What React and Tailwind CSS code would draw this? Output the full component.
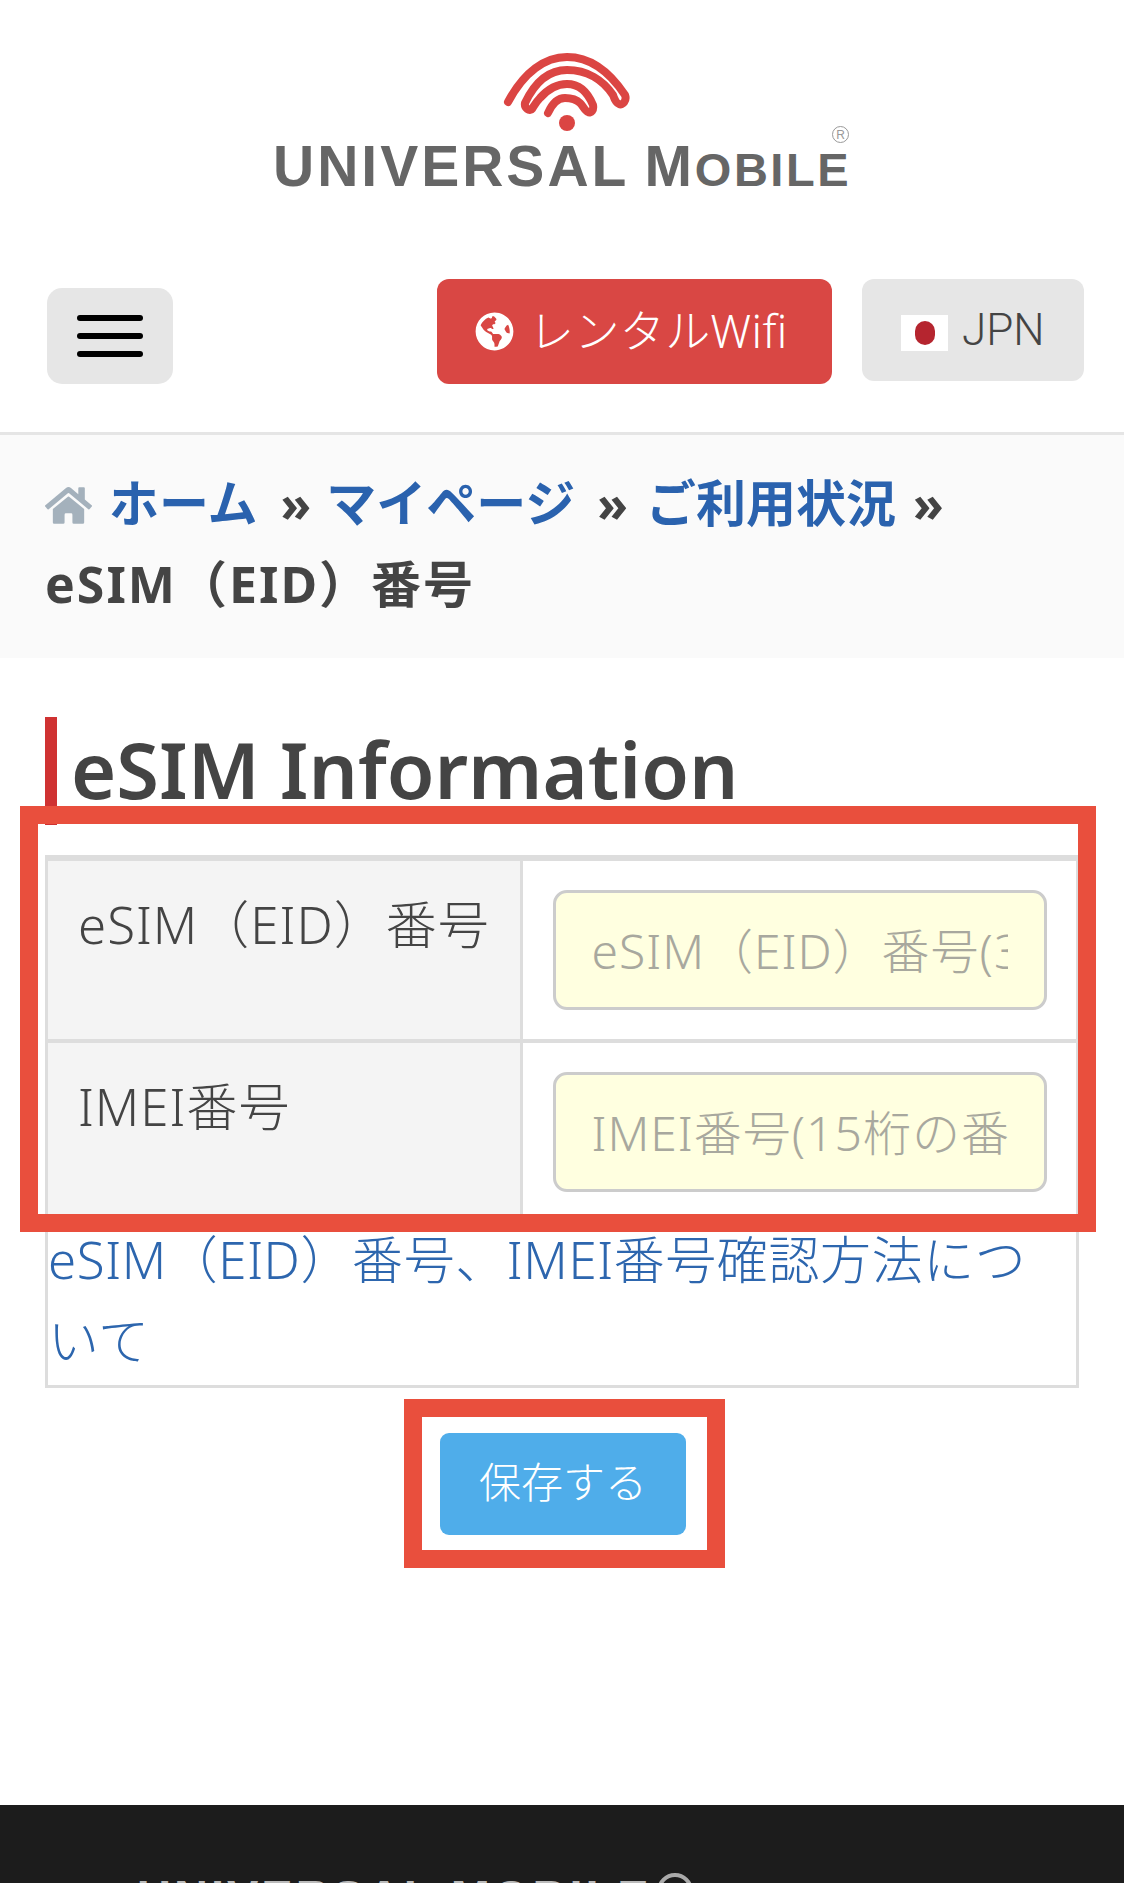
import React from 'react';
import { FaGlobeAmericas, FaHome } from 'react-icons/fa';

const Registered = ({ className }) => (
  <span className={`absolute flex items-center justify-center rounded-full border border-current leading-none ${className}`}>R</span>
);

const Logo = () => (
  <div className="flex h-[279px] flex-col items-center pt-[45px]">
    <svg className="ml-[16px] h-[95px] w-[160px] shrink-0" viewBox="490 45 160 95" fill="none">
      <path
        d="M508 102C524 72 545 57 567 57C592 57 611 74 625 95C627 100 623 106 619 104C616 103 614 98 613 95C603 80 587 70 567 70C549 70 535 82 525 103C524 108 530 112 532 109C534 106 536 102 540 98C548 89 557 84 567 84C580 84 588 93 593 105C594 110 591 114 588 112C585 111 583 106 580 103C576 99 571 98 565 98C558 98 552 104 548 113"
        stroke="#db4543"
        strokeWidth="8"
        strokeLinecap="round"
        strokeLinejoin="round"
      />
      <circle cx="567" cy="123" r="8" fill="#db4543" />
    </svg>
    <div className="relative -mt-[2px] whitespace-nowrap font-['Liberation_Sans',sans-serif] text-[57px] leading-[56px] font-bold text-[#666]">
      <span className="tracking-[3px]">UNIVERSAL</span>
      <span className="ml-[15px]">M</span>
      <span className="ml-[3px] text-[47px] tracking-[2.5px]">OBILE</span>
      <Registered className="-top-[12px] right-[2px] h-[17px] w-[17px] text-[12px] font-normal text-[#999]" />
    </div>
  </div>
);

const Nav = () => (
  <div className="flex items-start justify-between border-b-[3px] border-[#e5e5e5] pr-[40px] pb-[48px] pl-[47px]">
    <button className="mt-[9px] flex h-[96px] w-[126px] flex-col items-center justify-center gap-[12px] rounded-[15px] bg-[#e6e6e6]">
      <span className="h-[6px] w-[66px] rounded-full bg-black" />
      <span className="h-[6px] w-[66px] rounded-full bg-black" />
      <span className="h-[6px] w-[66px] rounded-full bg-black" />
    </button>
    <div className="flex items-start gap-[30px] text-[45px] font-light">
      <a className="flex h-[105px] w-[395px] items-start rounded-[12px] bg-[#d94744] pt-[21px] pl-[38px] leading-[60px] text-white">
        <FaGlobeAmericas className="mt-[12px] mr-[15px] h-[39px] w-[39px]" />
        <span className="mt-[1px] tracking-[0.4px]">レンタルWifi</span>
      </a>
      <a className="flex h-[102px] w-[222px] items-start rounded-[12px] bg-[#e6e6e6] pt-[21px] pl-[39px] font-['Roboto',sans-serif] text-[44px] leading-[60px] text-[#444]">
        <span className="mt-[15px] mr-[14px] flex h-[36px] w-[47px] items-center justify-center bg-white">
          <span className="h-[24px] w-[20px] rounded-full bg-[#b5252f]" />
        </span>
        JPN
      </a>
    </div>
  </div>
);

const Breadcrumb = () => (
  <div className="h-[223px] bg-[#fafafa] px-[45px] pt-[28px] text-[50px] leading-[81px] font-bold text-[#444]">
    <FaHome className="mr-[17px] inline-block h-[45px] w-[47px] align-[-6px] text-[#a4b1bc]" />
    <a className="text-[#2a62ae]">ホーム</a>
    <span className="mr-[15px] ml-[23px]">»</span>
    <a className="text-[#2a62ae]">マイページ</a>
    <span className="mr-[18px] ml-[22px]">»</span>
    <a className="text-[#2a62ae]">ご利用状況</a>
    <span className="ml-[17px]">»</span>
    <br />
    <span className="tracking-[2px]">eSIM（EID）番号</span>
  </div>
);

const rows = [
  { label: 'eSIM（EID）番号', hint: 'eSIM（EID）番号(32桁の番号)' },
  { label: 'IMEI番号', hint: 'IMEI番号(15桁の番号)' },
];

const InfoTable = () => (
  <div className="border-[3px] border-[#ddd] pb-[4px]">
    <table className="w-full table-fixed border-t-[3px] border-[#ddd]">
      <tbody>
        {rows.map((row) => (
          <tr key={row.label} className="border-b-[4px] border-[#ddd]">
            <th className="w-[473px] border-r-[3px] border-[#ddd] bg-[#f4f4f4] pt-[23px] pl-[30px] text-left align-top font-light tracking-[1px]">
              {row.label}
            </th>
            <td className="py-[29px] pr-[29px] pl-[30px]">
              <input
                className="h-[120px] w-full rounded-[14px] border-[3px] border-[#ccc] bg-[#ffffe0] px-[36px] text-[48px] font-light tracking-[1px] text-[#444] placeholder:text-[#a8a89e]"
                placeholder={row.hint}
              />
            </td>
          </tr>
        ))}
      </tbody>
    </table>
    <a className="-mt-[6px] block tracking-[0.6px] text-[#2d66ae]">
      eSIM（EID）番号、IMEI番号確認方法につ
      <br />
      いて
    </a>
  </div>
);

export default function App() {
  return (
    <div className="relative h-[1883px] overflow-hidden bg-white font-['Noto_Sans','Noto_Sans_CJK_JP',sans-serif] text-[51px] leading-[81px] font-light text-[#444]">
      <Logo />
      <Nav />
      <Breadcrumb />

      <main className="px-[45px] pt-[59px]">
        <h1 className="mb-[30px] h-[108px] border-l-[12px] border-[#cf3232] pl-[14px] font-['Noto_Sans',sans-serif] text-[77.5px] leading-[104px] font-semibold text-[#444]">
          eSIM Information
        </h1>
        <InfoTable />
        <div className="mt-[45px] flex justify-center">
          <div className="relative ml-[2px]">
            <button className="h-[102px] w-[246px] rounded-[9px] bg-[#4fadea] pb-[5px] text-[42px] font-light text-white">保存する</button>
            <div className="absolute -top-[34px] -right-[39px] -bottom-[33px] -left-[36px] border-[18px] border-[#e94f3d]" />
          </div>
        </div>
      </main>

      <footer className="mt-[270px] h-[78px] bg-[#1c1c1c] pt-[68px] pl-[137px]">
        <div className="relative w-[485px] whitespace-nowrap font-['Liberation_Sans',sans-serif] text-[47px] leading-none font-bold tracking-[3px] text-[#bbb]">
          UNIVERSAL MOBILE
          <Registered className="top-0 -right-[71px] h-[36px] w-[36px] border-[4px] text-[20px] text-[#aaa]" />
        </div>
      </footer>

      <div className="absolute top-[806px] left-[20px] h-[426px] w-[1076px] border-[18px] border-[#e94f3d]" />
    </div>
  );
}
